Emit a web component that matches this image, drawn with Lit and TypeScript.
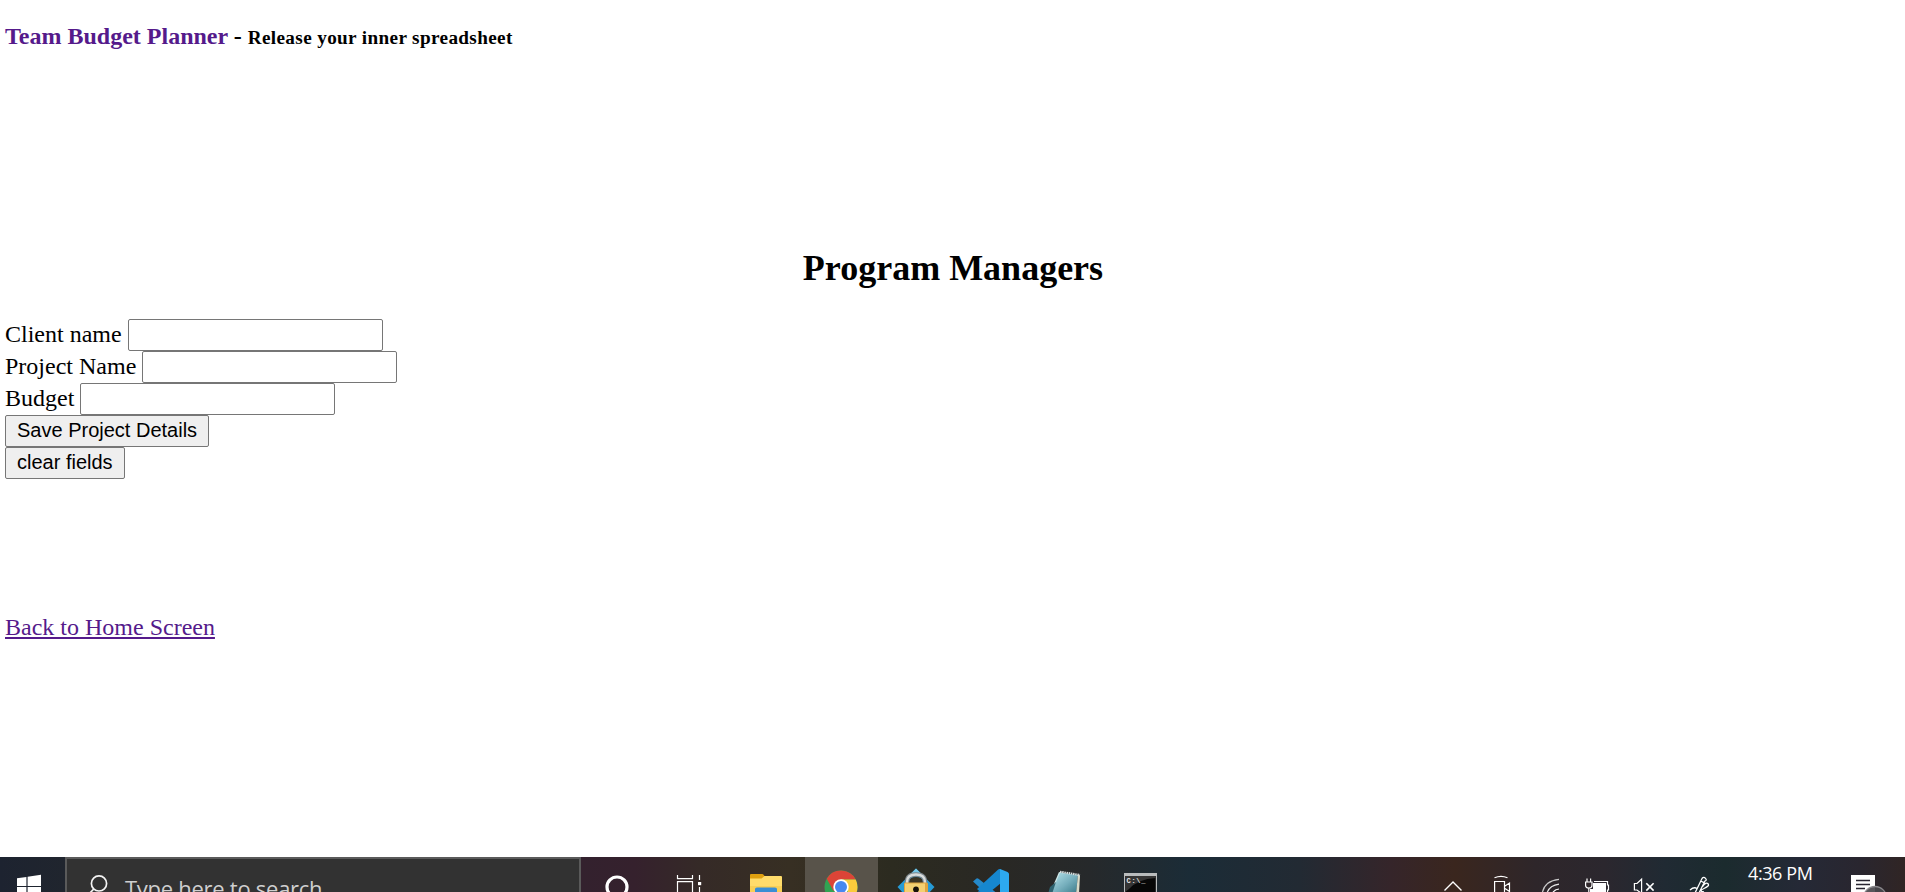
import { LitElement, html, svg, css, SVGTemplateResult } from "lit";
import { customElement } from "lit/decorators.js";

const BAR_TOP = 857;
const BAR_HEIGHT = 35;

/** One taskbar slot; its drawing uses screen coordinates. */
interface Slot {
  x: number;
  width: number;
  label: string;
  active?: boolean;
  art: SVGTemplateResult;
}

const draw = (s: Slot) => html`<svg
  width=${s.width}
  height=${BAR_HEIGHT}
  viewBox="${s.x} ${BAR_TOP} ${s.width} ${BAR_HEIGHT}"
  role="img"
  aria-label=${s.label}
>${s.art}</svg>`;

const start: Slot = {
  x: 0, width: 65, label: "Start",
  art: svg`<path fill="#fff" d="M17 878.2 26.4 876.9V886H17zM27.6 876.7 41 874.8V886H27.6zM17 887.1H26.4V897H17zM27.6 887.1H41V899H27.6z"/>`,
};

const magnifier: Slot = {
  x: 67, width: 58, label: "Search",
  art: svg`<g fill="none" stroke="#f4f4f4" stroke-width="1.7"><circle cx="99" cy="883.4" r="7.6"/><path d="M93.8 889 88 895"/></g>`,
};

const apps: Slot[] = [
  {
    x: 580, width: 75, label: "Cortana",
    art: svg`<circle cx="617" cy="887" r="10" fill="none" stroke="#fff" stroke-width="3.2"/>`,
  },
  {
    x: 655, width: 75, label: "Task View",
    art: svg`<g fill="none" stroke="#fff" stroke-width="1.2"><path d="M677.5 875V878.6H692.5V875M677.5 893V881.6H692.5V893M699.5 875V880M699.5 887V893"/></g><rect x="698" y="882" width="3.2" height="3.2" fill="#fff"/>`,
  },
  {
    x: 730, width: 75, label: "File Explorer",
    art: svg`<path fill="#ffdc6b" d="M750 876H781Q782 876 782 877V894H750z"/><path fill="#f8cf55" d="M750 886H782V894H750z"/><path fill="#dfa00f" d="M750 875Q750 874 751 874H762Q763.5 874 764.5 876L761.5 878.6H750z"/><path fill="#398ed5" d="M755 894V889Q755 887.5 757 887.5H775Q777 887.5 777 889V894z"/>`,
  },
  {
    x: 805, width: 73, label: "Google Chrome", active: true,
    art: svg`<circle cx="841" cy="887" r="16.5" fill="#31a352"/><path fill="#dc4437" d="M826.7 878.7A16.5 16.5 0 0 1 855.7 879.5H841L833.5 891z"/><path fill="#fbcb3c" d="M841 879.5H855.7A16.5 16.5 0 0 1 841 903.5L848 891z"/><circle cx="841" cy="887" r="7.7" fill="#fff"/><circle cx="841" cy="887" r="6" fill="#4788f1"/>`,
  },
  {
    x: 878, width: 77, label: "Locked vault",
    art: svg`<path fill="#269bd6" d="M916 868.5 934.5 887 928 894H904L897.5 887z"/><path fill="#77c8e8" d="M916 868.5 922 874.5H910z"/><path fill="#3c3524" d="M909 884V882Q909 877 916 877T923 882V884z"/><path fill="none" stroke="#7c858a" stroke-width="4.4" d="M907 884V882Q907 874.5 916 874.5T925 882V884"/><path fill="none" stroke="#d8dcdc" stroke-width="2.4" d="M907 884V882Q907 874.5 916 874.5T925 882V884"/><rect x="904" y="882.5" width="24" height="13" rx="1.5" fill="#dda440"/><rect x="905" y="883.5" width="20" height="12" fill="#f4d071"/><circle cx="916" cy="889.5" r="2.9" fill="#171009"/><path fill="#171009" d="M914.5 890H917.5V894H914.5z"/>`,
  },
  {
    x: 955, width: 75, label: "Visual Studio Code",
    art: svg`<path fill="#2489ca" d="M973 881.5 976.5 878.5Q977.5 878 978.5 878.8L1003 898H991z"/><path fill="#1070b3" d="M1000 869V882L981 897H973z"/><path fill="#1687cf" d="M998.2 869.4Q999 868.7 1000 869L1001 883 985 896 977 889z"/><path fill="#2da9ef" d="M999.5 868.8 1007.5 872Q1009 872.8 1009 874V894H1000V869z"/>`,
  },
  {
    x: 1030, width: 75, label: "Notepad",
    art: svg`<defs><linearGradient id="pad" x1="0" y1="0" x2="1" y2="1"><stop offset="0" stop-color="#b9e6ed"/><stop offset=".55" stop-color="#75aebc"/><stop offset="1" stop-color="#387887"/></linearGradient></defs><path fill="#d1e8e8" d="M1059 872 1050 893H1058L1063 873z"/><path fill="url(#pad)" d="M1060 872.5 1078 875 1076 894H1051z"/><path fill="#d9dbc9" d="M1078 874.5 1080 875.5 1079 894H1076z"/><path fill="#2f6370" d="M1050 887 1056 882 1052 894H1048z"/><path fill="none" stroke="#d7dfdf" stroke-width="2.2" stroke-dasharray="1.5 .7" d="M1060 871.8 1080 875"/>`,
  },
  {
    x: 1105, width: 75, label: "Command Prompt",
    art: svg`<rect x="1124" y="873" width="33" height="22" fill="#b9bcbd"/><rect x="1125.2" y="876" width="30.6" height="19" fill="#070707"/><path fill="#353535" d="M1125.2 876H1155.8V878Q1138 879 1129 889L1125.2 892z"/><text x="1126.5" y="883.2" font-family="Liberation Mono" font-size="7" font-weight="700" fill="#e8e8e8" textLength="19">C:\\_</text>`,
  },
];

const tray: Slot[] = [
  {
    x: 1430, width: 48, label: "Show hidden icons",
    art: svg`<path fill="none" stroke="#fff" stroke-width="1.4" d="M1444.5 890.5 1453 882 1461.5 890.5"/>`,
  },
  {
    x: 1478, width: 48, label: "Meet Now",
    art: svg`<g fill="none" stroke="#fff" stroke-width="1.2"><path d="M1494.5 877.8Q1501 874.8 1507.5 877.8M1494.6 881.5H1504.5V893H1494.6zM1505 886 1509.5 883V891.5L1505 888.5"/></g>`,
  },
  {
    x: 1526, width: 50, label: "Network",
    art: svg`<g fill="none" stroke-width="1.2"><path stroke="#c9c9c9" d="M1542.5 892Q1545 881 1559 879.4"/><path stroke="#e8e8e8" d="M1547 893Q1549.5 885.5 1559 884.2"/><path stroke="#fff" d="M1552 894Q1554 889.5 1559 889"/></g>`,
  },
  {
    x: 1576, width: 44, label: "Battery",
    art: svg`<path fill="none" stroke="#fff" stroke-width="1.2" d="M1594 881.5H1607.5V885H1608.5V890H1607.5V893"/><path fill="#fff" d="M1593 883H1606V893H1590V889H1593z"/><path fill="#30282c" stroke="#fff" stroke-width="1.2" d="M1585.6 882H1592V885.5Q1592 888 1588.8 888T1585.6 885.5z"/><path stroke="#fff" stroke-width="1.2" d="M1587 878.5V882M1590.6 878.5V882M1588.8 888V893"/>`,
  },
  {
    x: 1620, width: 50, label: "Muted",
    art: svg`<path fill="none" stroke="#fff" stroke-width="1.2" d="M1641.6 893V879.2L1637 883.5H1634.4V890H1637L1641 893"/><path stroke="#fff" stroke-width="1.6" d="M1646.3 883.3 1653.6 890.6M1653.6 883.3 1646.3 890.6"/>`,
  },
  {
    x: 1670, width: 60, label: "Windows Ink",
    art: svg`<g fill="none" stroke="#fff" stroke-width="1.3"><path d="M1695 893 1702 878.5Q1703.8 876.5 1705.5 878.4T1705 881L1699 893M1700.6 881 1704 882.6M1690 890Q1694 886.5 1697 888.5M1702.5 886.5Q1706 881.7 1708 883.8T1704 888.5 1704 892"/></g>`,
  },
];

const notifications: Slot = {
  x: 1840, width: 65, label: "Notifications",
  art: svg`<rect x="1851" y="875" width="24" height="19" fill="#fff"/><path stroke="#292632" stroke-width="1.3" d="M1856 880.5H1870M1856 884.5H1870M1856 888.5H1865"/><circle cx="1875" cy="898" r="11.5" fill="#4a484d" fill-opacity=".92" stroke="#8b898d" stroke-width="1.3"/>`,
};

@customElement("task-bar")
export class TaskBar extends LitElement {
  static styles = css`
    :host {
      display: flex;
      height: 35px;
      overflow: hidden;
      font-family: "Open Sans", "Noto Sans", sans-serif;
      background: linear-gradient(
        90deg,
        #1d2330 0, #20252e 65px, #33212e 580px, #35212d 635px, #352a27 700px,
        #372f23 790px, #2c2b20 890px, #292824 1000px, #26292b 1090px,
        #1b2c37 1190px, #222a33 1300px, #35252a 1390px, #3a261e 1455px,
        #2e262a 1535px, #2b272e 1605px, #202a33 1665px, #1b2b2e 1725px,
        #252936 1800px, #29262f 1860px, #302524 1905px
      );
    }
    svg { display: block; flex: none; }
    .search {
      box-sizing: border-box;
      display: flex;
      flex: none;
      width: 516px;
      margin-right: -1px;
      border: solid #5a5a5a;
      border-width: 2px 2px 0;
      background: #323232;
    }
    .search svg { margin-top: -2px; }
    .hint {
      color: #cfcfcf;
      font-size: 22px;
      line-height: 30px;
      letter-spacing: -0.27px;
      padding-top: 14px;
      white-space: nowrap;
    }
    .active { background: #58534a; }
    .tray { display: flex; margin-left: auto; }
    .clock {
      box-sizing: border-box;
      width: 110px;
      padding: 4px 0 0 18px;
      color: #fff;
      font-size: 18px;
      line-height: 24px;
      letter-spacing: -0.4px;
      white-space: nowrap;
    }
  `;

  render() {
    return html`
      ${draw(start)}
      <div class="search">${draw(magnifier)}<div class="hint">Type here to search</div></div>
      ${apps.map((a) => html`<div class=${a.active ? "active" : ""}>${draw(a)}</div>`)}
      <div class="tray">
        ${tray.map(draw)}
        <div class="clock">4:36 PM</div>
        ${draw(notifications)}
      </div>
    `;
  }
}

@customElement("app-root")
export class AppRoot extends LitElement {
  static styles = css`
    :host {
      display: flex;
      flex-direction: column;
      height: 892px;
      overflow: hidden;
      background: #fff;
      color: #000;
      font: 24px/32px "Liberation Serif", serif;
    }
    main { flex: 1; padding: 0 5px; }
    h3 {
      height: 32px;
      margin: 0;
      padding-top: 20px;
      font-size: 24px;
      line-height: 32px;
    }
    h3 a { text-decoration: none; }
    small { font-size: 19.2px; line-height: 1; letter-spacing: 0.36px; }
    a { color: #551a8b; }
    h1 {
      margin: 0;
      padding: 194px 0 0 1px;
      font-size: 36px;
      line-height: 44px;
      text-align: center;
    }
    form { padding-top: 29px; }
    .row { display: flex; height: 32px; }
    .row label { margin-right: 6px; line-height: 31px; }
    input, button {
      box-sizing: border-box;
      height: 32px;
      margin: 0;
      border: 1px solid #767676;
      border-radius: 2px;
      font: 20px "Liberation Sans", sans-serif;
    }
    input { width: 255px; background: #fff; outline: 0; }
    button { padding: 0 11px 2px; background: #efefef; color: #000; }
    .back { padding-top: 132px; }
  `;

  render() {
    return html`
      <main>
        <h3><a href="#">Team Budget Planner</a> - <small>Release your inner spreadsheet</small></h3>
        <h1>Program Managers</h1>
        <form @submit=${(e: Event) => e.preventDefault()}>
          <div class="row"><label for="client">Client name</label><input id="client" /></div>
          <div class="row"><label for="project">Project Name</label><input id="project" /></div>
          <div class="row"><label for="budget">Budget</label><input id="budget" /></div>
          <div class="row"><button type="submit">Save Project Details</button></div>
          <div class="row"><button type="reset">clear fields</button></div>
        </form>
        <div class="back"><a href="#">Back to Home Screen</a></div>
      </main>
      <task-bar></task-bar>
    `;
  }
}
